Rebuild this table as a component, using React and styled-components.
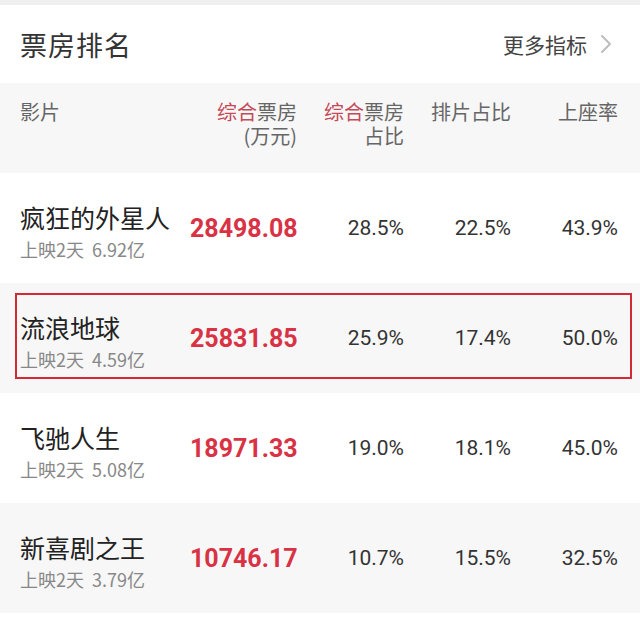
import React from "react";
import styled, { createGlobalStyle, css } from "styled-components";

const GlobalStyle = createGlobalStyle`
  html, body {
    margin: 0;
    padding: 0;
    background: #ffffff;
  }
  body {
    font-family: Roboto, "Noto Sans CJK SC", "Noto Sans", sans-serif;
    color: #333;
  }
`;

const movies = [
  { name: "疯狂的外星人", days: "上映2天", total: "6.92亿", box: "28498.08", share: "28.5%", screen: "22.5%", seat: "43.9%" },
  { name: "流浪地球", days: "上映2天", total: "4.59亿", box: "25831.85", share: "25.9%", screen: "17.4%", seat: "50.0%", highlight: true },
  { name: "飞驰人生", days: "上映2天", total: "5.08亿", box: "18971.33", share: "19.0%", screen: "18.1%", seat: "45.0%" },
  { name: "新喜剧之王", days: "上映2天", total: "3.79亿", box: "10746.17", share: "10.7%", screen: "15.5%", seat: "32.5%" },
];

const Page = styled.div`
  width: 640px;
  height: 620px;
  overflow: hidden;
  background: #fff;
  border-top: 5px solid #efefef;
  box-sizing: border-box;
`;

const TopBar = styled.div`
  height: 78px;
  display: flex;
  align-items: center;
  justify-content: space-between;
  padding: 0 28px 0 20px;
  background: #fff;
`;

const Title = styled.h1`
  margin: 0;
  font-family: "Noto Sans CJK SC", sans-serif;
  font-size: 27px;
  font-weight: 400;
  color: #333;
  letter-spacing: 1px;
`;

const More = styled.div`
  display: flex;
  align-items: center;
  gap: 13px;
  font-family: "Noto Sans CJK SC", sans-serif;
  font-size: 21px;
  color: #444;
`;

const grid = css`
  display: grid;
  grid-template-columns: 170px repeat(4, 107px);
  padding: 0 23px 0 20px;
`;

const HeadRow = styled.div`
  ${grid};
  height: 90px;
  box-sizing: border-box;
  padding-top: 17px;
  background: #f7f7f7;
  font-family: "Noto Sans CJK SC", sans-serif;
  font-size: 20px;
  line-height: 24px;
  color: #666;
`;

const HeadCell = styled.div`
  text-align: ${(p) => (p.$left ? "left" : "right")};
`;

const Accent = styled.span`
  color: #c44a58;
`;

const Row = styled.div`
  ${grid};
  position: relative;
  height: 110px;
  align-items: center;
  background: ${(p) => (p.$alt ? "#f7f7f7" : "#fff")};
  ${(p) =>
    p.$highlight &&
    css`
      &::after {
        content: "";
        position: absolute;
        top: 10px;
        bottom: 14px;
        left: 15px;
        right: 8px;
        border: 2px solid #d42a36;
        pointer-events: none;
      }
    `};
`;

const NameCell = styled.div`
  padding-top: 8px;
  font-family: "Noto Sans CJK SC", sans-serif;
`;

const MovieName = styled.div`
  font-size: 25px;
  line-height: 32px;
  color: #222;
  white-space: nowrap;
`;

const Sub = styled.div`
  margin-top: 2px;
  font-size: 18px;
  line-height: 28px;
  color: #888;
  white-space: nowrap;
  span + span {
    margin-left: 8px;
  }
`;

const BoxValue = styled.div`
  text-align: right;
  font-family: Roboto, sans-serif;
  font-weight: 700;
  font-size: 25px;
  color: #d93245;
`;

const Value = styled.div`
  text-align: right;
  font-family: Roboto, sans-serif;
  font-size: 21px;
  color: #333;
`;

const Chevron = () => (
  <svg width="12" height="20" viewBox="0 0 12 20" fill="none">
    <path d="M2 2l8 8-8 8" stroke="#bdbdbd" strokeWidth="2" strokeLinecap="round" strokeLinejoin="round" />
  </svg>
);

export default function App() {
  return (
    <>
      <GlobalStyle />
      <Page>
        <TopBar>
          <Title>票房排名</Title>
          <More>
            更多指标
            <Chevron />
          </More>
        </TopBar>
        <HeadRow>
          <HeadCell $left>影片</HeadCell>
          <HeadCell>
            <Accent>综合</Accent>票房
            <br />
            (万元)
          </HeadCell>
          <HeadCell>
            <Accent>综合</Accent>票房
            <br />
            占比
          </HeadCell>
          <HeadCell>排片占比</HeadCell>
          <HeadCell>上座率</HeadCell>
        </HeadRow>
        {movies.map((m, i) => (
          <Row key={m.name} $alt={i % 2 === 1} $highlight={m.highlight}>
            <NameCell>
              <MovieName>{m.name}</MovieName>
              <Sub>
                <span>{m.days}</span>
                <span>{m.total}</span>
              </Sub>
            </NameCell>
            <BoxValue>{m.box}</BoxValue>
            <Value>{m.share}</Value>
            <Value>{m.screen}</Value>
            <Value>{m.seat}</Value>
          </Row>
        ))}
      </Page>
    </>
  );
}
